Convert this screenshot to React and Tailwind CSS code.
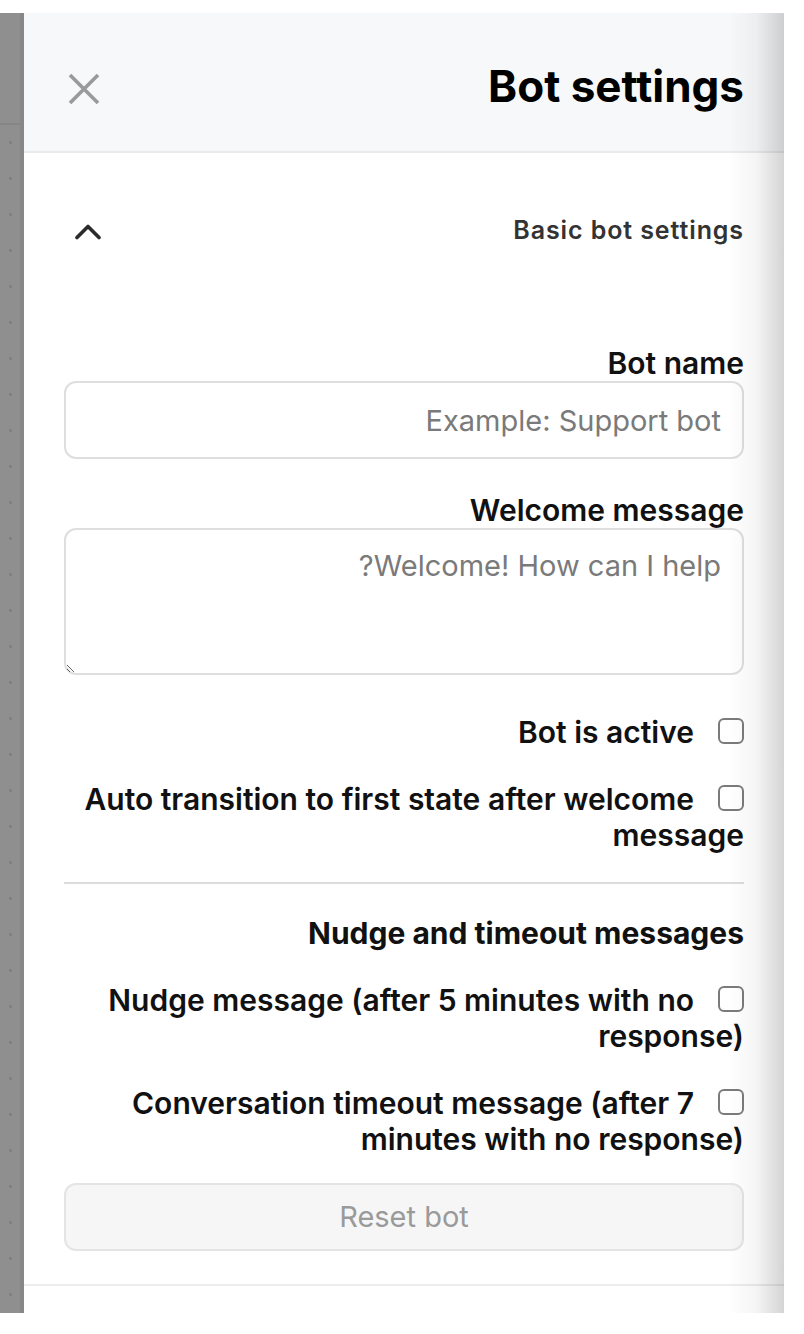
import { useState } from "react";

const dots = Array.from({ length: 33 }, (_, i) => i);

function CloseIcon() {
    return (
        <svg width="32" height="30" viewBox="0 0 32 30" fill="none">
            <path d="M2 1 L30 29 M30 1 L2 29" stroke="#9a9a9a" strokeWidth="3.6" />
        </svg>
    );
}

function ChevronUp() {
    return (
        <svg width="26" height="17" viewBox="0 0 26 17" fill="none">
            <path d="M2 14.5 L13 3.5 L24 14.5" stroke="#2b2b2b" strokeWidth="3.6" strokeLinecap="round" strokeLinejoin="round" />
        </svg>
    );
}

function CheckRow({ label, checked, onChange }) {
    return (
        <label className="block text-right text-[30px] leading-[36px] font-semibold text-[#111]">
            <input
                type="checkbox"
                checked={checked}
                onChange={onChange}
                className="appearance-none w-[26px] h-[26px] border-2 border-[#7b7b7b] rounded-[6px] align-[-1px] ml-[24px] bg-white"
            />
            {label}
        </label>
    );
}

export default function App() {
    const [active, setActive] = useState(false);
    const [autoTransition, setAutoTransition] = useState(false);
    const [nudge, setNudge] = useState(false);
    const [timeout, setTimeoutMsg] = useState(false);

    return (
        <div className="w-[804px] h-[1334px] bg-white pt-[13px]" style={{ fontFamily: "Inter, 'Noto Sans', sans-serif" }}>
            <div className="flex h-[1300px]">

                {/* Dimmed page behind the drawer */}
                <div className="relative w-[24px] h-full bg-[#8f8f8f] border-r-[4px] border-[#878787]">
                    <div className="h-[112px] border-b-2 border-[#868686]" />
                    <div className="flex flex-col gap-[33px] pt-[16px] pl-[9px]">
                        {dots.map((d) => (
                            <div key={d} className="w-[3px] h-[3px] rounded-full bg-[#7d7d86]" />
                        ))}
                    </div>
                </div>

                {/* Drawer */}
                <div dir="rtl" className="relative w-[760px] h-full bg-white flex flex-col">

                    {/* Header */}
                    <div className="h-[140px] shrink-0 bg-[#f7f8fa] border-b-2 border-[#e9eaec] flex items-center justify-between pr-[40px] pl-[44px]">
                        <h1 className="text-[44px] font-bold text-black pt-[8px]">
                            Bot settings
                        </h1>
                        <button className="pt-[14px]">
                            <CloseIcon />
                        </button>
                    </div>

                    {/* Body */}
                    <div className="px-[40px]">

                        {/* Accordion header */}
                        <div className="h-[158px] flex items-center justify-between pb-[2px]">
                            <span className="text-[25px] font-semibold text-[#333] tracking-[0.9px]">
                                Basic bot settings
                            </span>
                            <span className="ml-[11px]">
                                <ChevronUp />
                            </span>
                        </div>

                        <div className="pt-[34px]">
                            {/* Bot name */}
                            <label className="block text-[30px] leading-[36px] font-semibold text-[#111]">
                                Bot name
                            </label>
                            <input
                                type="text"
                                placeholder="Example: Support bot"
                                className="w-full h-[78px] border-2 border-[#dedede] rounded-[12px] px-[21px] text-[29px] text-[#222] placeholder:text-[#7a7a7a] outline-none"
                            />

                            {/* Welcome message */}
                            <label className="block mt-[33px] text-[30px] leading-[36px] font-semibold text-[#111]">
                                Welcome message
                            </label>
                            <textarea
                                placeholder="Welcome! How can I help?"
                                className="block w-full h-[147px] border-2 border-[#dedede] rounded-[12px] px-[21px] py-[18px] text-[29px] leading-[36px] text-[#222] placeholder:text-[#7a7a7a] outline-none"
                            />

                            <div className="mt-[39px] flex flex-col gap-[31px]">
                                <CheckRow
                                    label="Bot is active"
                                    checked={active}
                                    onChange={() => setActive(!active)}
                                />
                                <CheckRow
                                    label="Auto transition to first state after welcome message"
                                    checked={autoTransition}
                                    onChange={() => setAutoTransition(!autoTransition)}
                                />
                            </div>

                            <hr className="mt-[29px] border-0 h-[2px] bg-[#dcdcdc]" />

                            <div className="mt-[31px] flex flex-col gap-[31px]">
                                <h3 className="text-[30px] leading-[36px] font-bold text-[#111]">
                                    Nudge and timeout messages
                                </h3>
                                <CheckRow
                                    label="Nudge message (after 5 minutes with no response)"
                                    checked={nudge}
                                    onChange={() => setNudge(!nudge)}
                                />
                                <CheckRow
                                    label="Conversation timeout message (after 7 minutes with no response)"
                                    checked={timeout}
                                    onChange={() => setTimeoutMsg(!timeout)}
                                />
                            </div>

                            <button
                                disabled
                                className="mt-[26px] w-full h-[68px] bg-[#f6f6f6] border-2 border-[#e4e4e4] rounded-[12px] text-[29px] text-[#9a9a9a]"
                            >
                                Reset bot
                            </button>
                        </div>
                    </div>

                    {/* Footer line */}
                    <div className="mt-[33px] border-t-2 border-[#ececec]" />

                    {/* Edge shadow */}
                    <div className="absolute top-0 right-0 h-full w-[56px] bg-linear-to-r from-transparent via-black/[0.04] to-black/[0.17] pointer-events-none" />
                </div>
            </div>
        </div>
    );
}
